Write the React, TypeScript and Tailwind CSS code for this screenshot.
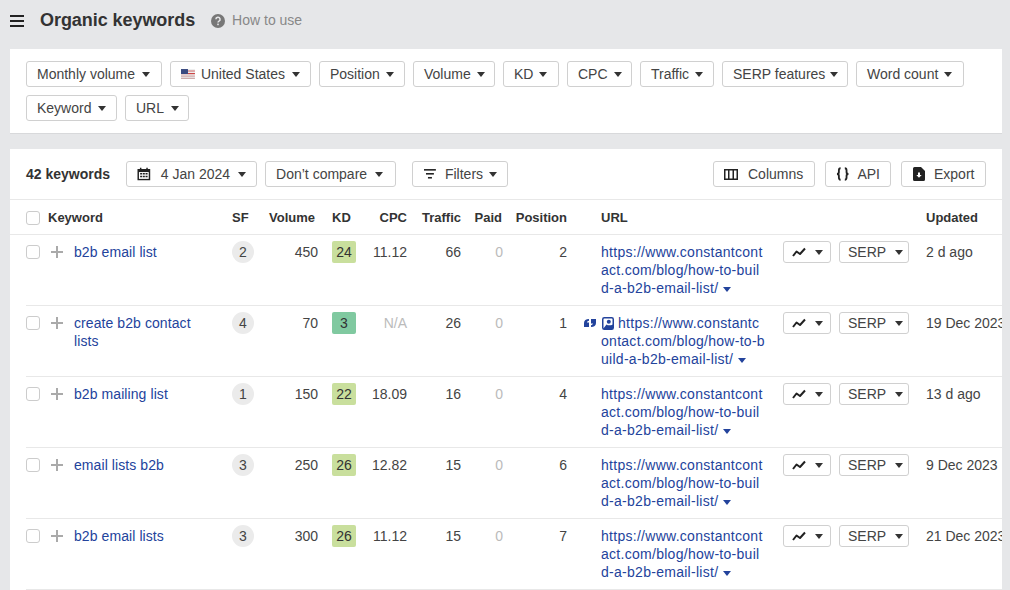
import React from "react";

const Caret = ({ className = "ml-[7px] text-[#333]" }: { className?: string }) => (
  <svg width="8" height="5" viewBox="0 0 8 5" className={`inline-block shrink-0 ${className}`}>
    <path d="M0 0h8L4 5z" fill="currentColor" />
  </svg>
);

const Btn = ({ children, className = "" }: { children: React.ReactNode; className?: string }) => (
  <div className={`flex h-[26px] items-center whitespace-nowrap rounded-[3px] border border-[#d0d0d0] bg-white px-[10px] text-[14px] text-[#444] ${className}`}>
    {children}
  </div>
);

const Flag = () => (
  <svg width="14" height="10" viewBox="0 0 14 10" className="mr-[6px]">
    <rect width="14" height="10" fill="#eee" />
    <rect y="1.500" width="14" height="1" fill="#c66" />
    <rect y="4" width="14" height="1.200" fill="#c44" />
    <rect y="6.600" width="14" height="1" fill="#c99" />
    <rect y="8.800" width="14" height="1.200" fill="#caa" />
    <rect width="7" height="5" fill="#3a4a80" />
  </svg>
);

const Check = () => <div className="h-[14px] w-[14px] rounded-[3px] border border-[#ccc] bg-white" />;

const Trend = () => (
  <svg width="14" height="10" viewBox="0 0 14 10" fill="none" stroke="#222" strokeWidth="2">
    <path d="M1 9 L4.500 4.500 L8 7 L13 1.500" strokeLinejoin="round" />
  </svg>
);

type Row = {
  kw: string[];
  sf: number;
  vol: number;
  kd: number;
  kdc: string;
  cpc: string;
  tr: number;
  pos: number;
  date: string;
  special?: boolean;
};

const rows: Row[] = [
  { kw: ["b2b email list"], sf: 2, vol: 450, kd: 24, kdc: "bg-[#c9df9d]", cpc: "11.12", tr: 66, pos: 2, date: "2 d ago" },
  { kw: ["create b2b contact", "lists"], sf: 4, vol: 70, kd: 3, kdc: "bg-[#80c9a0]", cpc: "N/A", tr: 26, pos: 1, date: "19 Dec 2023", special: true },
  { kw: ["b2b mailing list"], sf: 1, vol: 150, kd: 22, kdc: "bg-[#c9df9d]", cpc: "18.09", tr: 16, pos: 4, date: "13 d ago" },
  { kw: ["email lists b2b"], sf: 3, vol: 250, kd: 26, kdc: "bg-[#c9df9d]", cpc: "12.82", tr: 15, pos: 6, date: "9 Dec 2023" },
  { kw: ["b2b email lists"], sf: 3, vol: 300, kd: 26, kdc: "bg-[#c9df9d]", cpc: "11.12", tr: 15, pos: 7, date: "21 Dec 2023" },
];

const urlA = ["https://www.constantcont", "act.com/blog/how-to-buil", "d-a-b2b-email-list/"];
const urlB = ["https://www.constantc", "ontact.com/blog/how-to-b", "uild-a-b2b-email-list/"];

const grid = "grid grid-cols-[48px_158px_24px_62px_38px_51px_54px_42px_64px_216px_143px_100px]";

export default function App() {
  return (
    <div className="h-[590px] w-[1010px] overflow-hidden bg-[#e6e7e9] font-['Liberation_Sans',Arial,sans-serif] text-[14px] text-[#333]">
      <header className="flex h-[49px] items-center pb-[8px] pl-[10px]">
        <svg width="14" height="12" viewBox="0 0 14 12" fill="#222">
          <rect width="14" height="2" />
          <rect y="5" width="14" height="2" />
          <rect y="10" width="14" height="2" />
        </svg>
        <h1 className="ml-[16px] text-[18px] font-bold tracking-[-0.06px] text-[#333]">Organic keywords</h1>
        <svg width="14" height="14" viewBox="0 0 14 14" className="ml-[16px]">
          <circle cx="7" cy="7" r="7" fill="#777" />
          <path d="M4.900 5.300a2.100 2 0 1 1 3.100 1.800c-.7.4-1 .7-1 1.400" fill="none" stroke="#e6e7e9" strokeWidth="1.500" />
          <rect x="6.200" y="9.600" width="1.600" height="1.600" fill="#e6e7e9" />
        </svg>
        <span className="ml-[7px] text-[14px] text-[#888]">How to use</span>
      </header>

      <section className="mx-[10px] w-[992px] border-b border-[#d8d9db] bg-white px-[16px] py-[12px]">
        <div className="flex flex-wrap gap-[8px]">
          <Btn className="w-[136px]">Monthly volume<Caret /></Btn>
          <Btn className="w-[141px]"><Flag />United States<Caret /></Btn>
          <Btn className="w-[86px]">Position<Caret className="ml-[6px] text-[#333]" /></Btn>
          <Btn className="w-[82px]">Volume<Caret className="ml-[6px] text-[#333]" /></Btn>
          <Btn className="w-[56px]">KD<Caret className="ml-[6px] text-[#333]" /></Btn>
          <Btn className="w-[65px]">CPC<Caret className="ml-[6px] text-[#333]" /></Btn>
          <Btn className="w-[74px]">Traffic<Caret className="ml-[6px] text-[#333]" /></Btn>
          <Btn className="w-[126px]">SERP features<Caret className="ml-[5px] text-[#333]" /></Btn>
          <Btn className="w-[108px]">Word count<Caret className="ml-[6px] text-[#333]" /></Btn>
          <Btn className="w-[91px]">Keyword<Caret /></Btn>
          <Btn className="w-[64px]">URL<Caret /></Btn>
        </div>
      </section>

      <section className="mx-[10px] mt-[15px] w-[992px] overflow-hidden bg-white">
        <div className="flex h-[51px] items-center border-b border-[#e8e8e8] px-[16px]">
          <b className="mr-[16px] text-[14px] text-[#333]">42 keywords</b>
          <Btn className="mr-[8px] w-[131px]">
            <svg width="14" height="14" viewBox="0 0 14 14" className="mr-[10px]">
              <path d="M0.500 2h2.500V0.500h1.500V2h5V0.500H11V2h2.500v11.500H0.500z" fill="#222" />
              <path d="M2 5h10v7H2z" fill="#fff" />
              <path d="M3.200 6h2.100v1.500H3.200zM6 6h2v1.500H6zM8.700 6h2.100v1.500H8.700zM3.200 8.800h2.100v1.500H3.200zM6 8.800h2v1.500H6zM8.700 8.800h2.100v1.500H8.700z" fill="#222" />
            </svg>
            4 Jan 2024<Caret className="ml-[8px] text-[#333]" />
          </Btn>
          <Btn className="mr-[16px] w-[131px]">Don’t compare<Caret className="ml-[8px] text-[#333]" /></Btn>
          <Btn className="w-[96px]">
            <svg width="12" height="10" viewBox="0 0 12 10" fill="#222" className="ml-[1px] mr-[9px]">
              <rect width="12" height="1.600" />
              <rect x="2" y="4" width="8" height="1.600" />
              <rect x="4" y="8" width="4" height="1.600" />
            </svg>
            Filters<Caret className="ml-[6px] text-[#333]" />
          </Btn>
          <div className="ml-auto flex gap-[10px]">
            <Btn className="w-[102px]">
              <svg width="14" height="11" viewBox="0 0 14 11" fill="#222" className="mr-[10px]">
                <path d="M0 0h14v11H0zM1.500 1.500v8h2.500v-8zM5.500 1.500v8h3v-8zM10 1.500v8h2.500v-8z" fillRule="evenodd" />
              </svg>
              Columns
            </Btn>
            <Btn className="w-[66px]">
              <svg width="14" height="14" viewBox="0 0 14 14" fill="none" stroke="#222" strokeWidth="1.900" className="mr-[8px]">
                <path d="M4.800 1C3 1 3 2 3 3.300v1.900C3 6.200 2.400 7 1 7c1.400 0 2 .8 2 1.800v1.900C3 12 3 13 4.800 13M9.200 1C11 1 11 2 11 3.300v1.900c0 1 .6 1.800 2 1.800-1.400 0-2 .8-2 1.800v1.900C11 12 11 13 9.200 13" />
              </svg>
              API
            </Btn>
            <Btn className="w-[85px]">
              <svg width="12" height="14" viewBox="0 0 12 14" className="ml-[1px] mr-[9px]">
                <path d="M1.500 0H8l4 4v8.500a1.500 1.500 0 0 1-1.500 1.500h-9A1.500 1.500 0 0 1 0 12.500v-11A1.500 1.500 0 0 1 1.500 0z" fill="#222" />
                <path d="M5 5.500h2V8h1.700L6 10.700 3.300 8H5z" fill="#fff" />
              </svg>
              Export
            </Btn>
          </div>
        </div>

        <div className={`${grid} h-[35px] items-center border-b border-[#e8e8e8] pl-[16px] pt-[1px] text-[13px] font-bold text-[#333]`}>
          <div className="col-span-2 flex items-center">
            <Check />
            <span className="ml-[8px]">Keyword</span>
          </div>
          <div>SF</div>
          <div className="pr-[3px] text-right">Volume</div>
          <div className="pl-[14px]">KD</div>
          <div className="text-right">CPC</div>
          <div className="text-right">Traffic</div>
          <div className="pr-[1px] text-right">Paid</div>
          <div className="text-right">Position</div>
          <div className="pl-[34px]">URL</div>
          <div />
          <div>Updated</div>
        </div>

        {rows.map((r) => {
          const lines = r.special ? urlB : urlA;
          return (
            <div key={r.kw[0]} className="ml-[16px] h-[71px] border-b border-[#e8e8e8]">
              <div className={`${grid} pt-[6px] leading-[18px] text-[#444]`}>
                <div className="flex h-[22px] items-center">
                  <Check />
                  <svg width="12" height="12" viewBox="0 0 12 12" fill="#aaa" className="ml-[11px]">
                    <rect x="5" width="2" height="12" />
                    <rect y="5" width="12" height="2" />
                  </svg>
                </div>
                <div className="pt-[2px] tracking-[0.08px] text-[#23439c]">
                  {r.kw.map((k) => (
                    <div key={k}>{k}</div>
                  ))}
                </div>
                <div className="flex h-[22px] w-[22px] items-center justify-center rounded-full bg-[#ebebeb] text-[#444]">{r.sf}</div>
                <div className="pt-[2px] text-right">{r.vol}</div>
                <div className="pl-[14px]">
                  <div className={`flex h-[22px] w-[24px] items-center justify-center rounded-[2px] ${r.kdc} text-[#333]`}>{r.kd}</div>
                </div>
                <div className={`pt-[2px] text-right ${r.cpc === "N/A" ? "text-[#bbb]" : ""}`}>{r.cpc}</div>
                <div className="pt-[2px] text-right">{r.tr}</div>
                <div className="pt-[2px] text-right text-[#bbb]">0</div>
                <div className="pt-[2px] text-right">{r.pos}</div>
                <div className="ml-[34px] whitespace-nowrap pt-[2px] tracking-[0.28px] text-[#23439c]">
                  <div>
                    {r.special && (
                      <>
                        <svg width="12" height="9" viewBox="0 0 12 9" fill="#23439c" className="-ml-[17px] mr-[6px] inline-block align-[0px]">
                          <path d="M5 0v1.800C3.800 2 3.200 2.500 3 3.400h2V8H0V4C0 1.500 2 0 5 0z" />
                          <path d="M7 8V6.200C8.200 6 8.800 5.500 9 4.600H7V0h5v4c0 2.500-2 4-5 4z" />
                        </svg>
                        <svg width="12" height="13" viewBox="0 0 12 13" className="mr-[4px] inline-block align-[-2px]">
                          <rect x="0.750" y="0.750" width="10.500" height="11.500" rx="1.500" fill="none" stroke="#23439c" strokeWidth="1.500" />
                          <circle cx="6.800" cy="4.800" r="2" fill="#23439c" />
                          <path d="M1 12L4.500 7.500C6 8.500 8 8.800 11 7.500V12z" fill="#23439c" />
                        </svg>
                      </>
                    )}
                    {lines[0]}
                  </div>
                  <div>{lines[1]}</div>
                  <div>
                    {lines[2]}
                    <Caret className="ml-[5px] text-[#23439c]" />
                  </div>
                </div>
                <div className="flex gap-[8px]">
                  <div className="flex h-[22px] w-[48px] items-center rounded-[3px] border border-[#d0d0d0] pl-[8px]">
                    <Trend />
                    <Caret className="ml-[9px] text-[#333]" />
                  </div>
                  <div className="flex h-[22px] w-[70px] items-center rounded-[3px] border border-[#d0d0d0] pl-[8px]">
                    SERP
                    <Caret className="ml-[9px] text-[#333]" />
                  </div>
                </div>
                <div className="whitespace-nowrap pt-[2px]">{r.date}</div>
              </div>
            </div>
          );
        })}
      </section>
    </div>
  );
}
